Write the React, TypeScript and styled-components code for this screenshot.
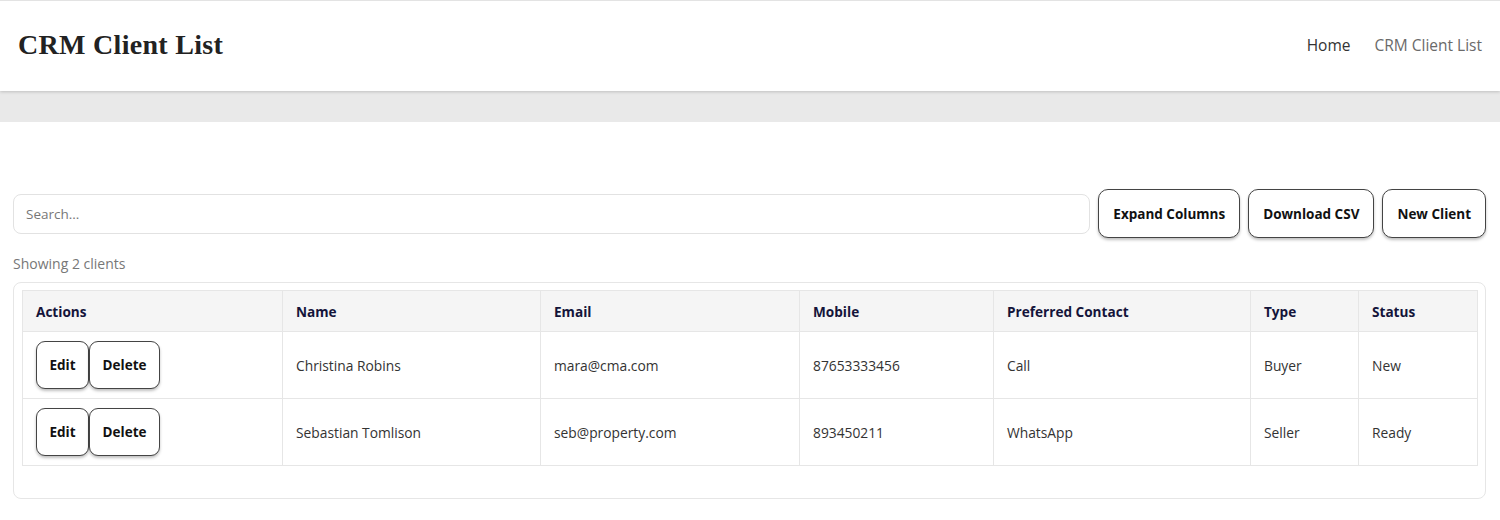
import React from "react";
import styled, { createGlobalStyle } from "styled-components";

const Global = createGlobalStyle`
  * { box-sizing: border-box; }
  body { margin: 0; background: #fff; font-family: "Open Sans", "Noto Sans", sans-serif; color: #333; }
`;

const Header = styled.header`
  height: 91px;
  border-top: 1px solid #e3e3e3;
  background: #fff;
  display: flex;
  align-items: center;
  justify-content: space-between;
  padding: 0 18px 3px 18px;
  box-shadow: 0 1px 3px rgba(0,0,0,0.18);
  position: relative;
  z-index: 1;
`;

const Title = styled.h1`
  margin: 0;
  font-family: "Liberation Serif", "DejaVu Serif", serif;
  font-weight: 700;
  font-size: 28px;
  color: #222;
  letter-spacing: 0.3px;
`;

const Nav = styled.nav`
  display: flex;
  gap: 24px;
`;

const NavLink = styled.a<{ $active?: boolean }>`
  font-size: 15.5px;
  color: ${p => (p.$active ? "#333" : "#6a6a6a")};
  text-decoration: none;
`;

const Band = styled.div`
  height: 31px;
  background: #e9e9e9;
`;

const Main = styled.main`
  padding: 67px 14px 0 13px;
`;

const Toolbar = styled.div`
  display: flex;
  align-items: center;
  gap: 8px;
`;

const Search = styled.input`
  flex: 1;
  height: 40px;
  border: 1px solid #e2e2e2;
  border-radius: 8px;
  padding: 0 12px;
  font-family: inherit;
  font-size: 13.5px;
  color: #333;
  outline: none;
  &::placeholder { color: #777; }
`;

const Button = styled.button`
  height: 49px;
  padding: 0 14px;
  background: #fff;
  border: 1px solid #444;
  border-radius: 10px;
  box-shadow: 0 2px 3px rgba(0,0,0,0.25);
  font-family: inherit;
  font-weight: 700;
  font-size: 13.5px;
  color: #111;
  cursor: pointer;
  white-space: nowrap;
`;

const ActionButton = styled(Button)`
  height: 48px;
  padding: 0 12.5px;
  border-radius: 9px;
`;

const Count = styled.p`
  margin: 16px 0 9px;
  font-size: 14px;
  color: #777;
`;

const Card = styled.div`
  border: 1px solid #e6e6e6;
  border-radius: 8px;
  padding: 7px 8px 32px 8px;
`;

const Table = styled.table`
  width: 100%;
  border-collapse: collapse;
  table-layout: fixed;
`;

const Th = styled.th`
  background: #f5f5f5;
  height: 41px;
  text-align: left;
  padding: 0 13px;
  font-size: 13.6px;
  font-weight: 700;
  color: #14143a;
  border: 1px solid #e6e6e6;
`;

const Td = styled.td`
  height: 67px;
  padding: 0 13px;
  font-size: 13.8px;
  color: #333;
  border: 1px solid #e6e6e6;
`;

const Actions = styled.div`
  display: flex;
`;

const columns = [
  { label: "Actions", width: 260 },
  { label: "Name", width: 258 },
  { label: "Email", width: 259 },
  { label: "Mobile", width: 194 },
  { label: "Preferred Contact", width: 257 },
  { label: "Type", width: 108 },
  { label: "Status", width: 119 },
];

const clients = [
  { name: "Christina Robins", email: "mara@cma.com", mobile: "87653333456", contact: "Call", type: "Buyer", status: "New" },
  { name: "Sebastian Tomlison", email: "seb@property.com", mobile: "893450211", contact: "WhatsApp", type: "Seller", status: "Ready" },
];

export default function App() {
  return (
    <>
      <Global />
      <Header>
        <Title>CRM Client List</Title>
        <Nav>
          <NavLink href="#" $active>Home</NavLink>
          <NavLink href="#">CRM Client List</NavLink>
        </Nav>
      </Header>
      <Band />
      <Main>
        <Toolbar>
          <Search placeholder="Search..." />
          <Button>Expand Columns</Button>
          <Button>Download CSV</Button>
          <Button>New Client</Button>
        </Toolbar>
        <Count>Showing 2 clients</Count>
        <Card>
          <Table>
            <colgroup>
              {columns.map(c => (
                <col key={c.label} style={{ width: c.width }} />
              ))}
            </colgroup>
            <thead>
              <tr>
                {columns.map(c => (
                  <Th key={c.label}>{c.label}</Th>
                ))}
              </tr>
            </thead>
            <tbody>
              {clients.map(c => (
                <tr key={c.name}>
                  <Td>
                    <Actions>
                      <ActionButton>Edit</ActionButton>
                      <ActionButton>Delete</ActionButton>
                    </Actions>
                  </Td>
                  <Td>{c.name}</Td>
                  <Td>{c.email}</Td>
                  <Td>{c.mobile}</Td>
                  <Td>{c.contact}</Td>
                  <Td>{c.type}</Td>
                  <Td>{c.status}</Td>
                </tr>
              ))}
            </tbody>
          </Table>
        </Card>
      </Main>
    </>
  );
}
